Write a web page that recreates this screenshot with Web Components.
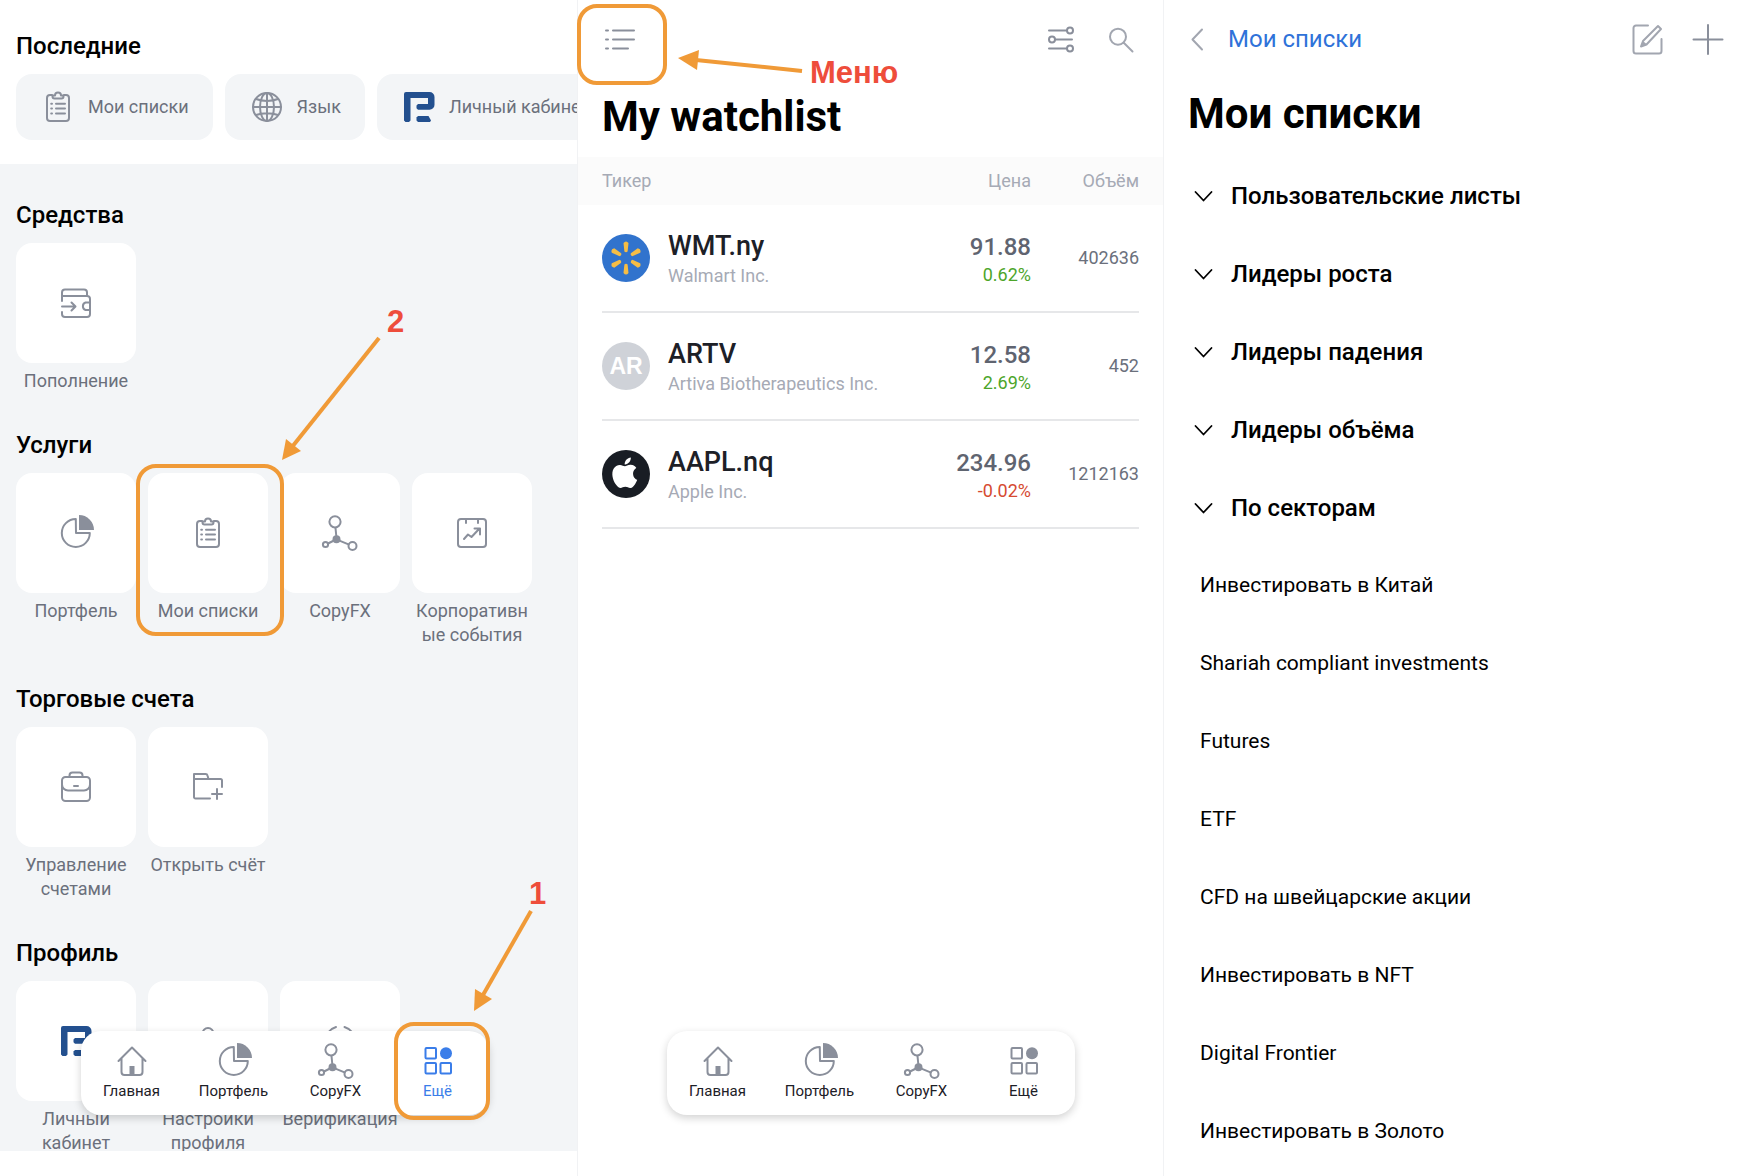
<!DOCTYPE html>
<html lang="ru">
<head>
<meta charset="utf-8">
<title>Мои списки</title>
<style>
  html, body { margin: 0; height: 100%; }
  body {
    background: #fff;
    color: #000;
    font-family: Roboto, "Liberation Sans", sans-serif;
    overflow: hidden;
  }
</style>
</head>
<body>
<guide-board>
  <more-screen></more-screen>
  <watchlist-screen></watchlist-screen>
  <lists-screen></lists-screen>
</guide-board>

<script>
// all icons are drawn on a 36x36 grid
const ICONS = {
  clipboard: `<path d="M12 6H10a3 3 0 0 0-3 3v20a3 3 0 0 0 3 3h16a3 3 0 0 0 3-3V9a3 3 0 0 0-3-3h-2"/>
    <path d="M12.5 6.5h2.5a3 3 0 0 1 6 0h2.5v1a2 2 0 0 1-2 2h-7a2 2 0 0 1-2-2z"/>
    <path d="M11.2 14.7h.8M11.2 19.5h.8M11.2 24.5h.8M16 14.7h9M16 19.5h9M16 24.5h9"/>`,
  globe: `<circle cx="18" cy="18" r="14"/><ellipse cx="18" cy="18" rx="7" ry="14"/>
    <path d="M4 18h28M18 4v28M7 10c6 2.5 16 2.5 22 0M7 26c6-2.5 16-2.5 22 0"/>`,
  logo: `<path class="brand" d="M3 31.5V5a2 2 0 0 1 2-2h23.5a5 5 0 0 1 5 5v7.7a5 5 0 0 1-5 5H17l-1.5-1.5v-2.700L17 15h10V9H9.5v22.500L8 33H4.500z"/>
    <path class="brand" d="M17 27h10.500l2.500 4.500-1 1.500H17l-1.500-1.500v-3z"/>`,
  wallet: `<path d="M4 16V7.5a3 3 0 0 1 3-3h19a3 3 0 0 1 3 3V11M4 11h25a3 3 0 0 1 3 3v15a3 3 0 0 1-3 3H7a3 3 0 0 1-3-3v-2"/>
    <path d="M4 21.5h13M13.5 17.5l4 4-4 4M32 17.5h-4.5a4 4 0 0 0 0 7.5H32"/>`,
  pie: `<path d="M17.8 4a14 14 0 1 0 14 14H18z"/><path class="solid" d="M21 0a15 15 0 0 1 15 15H21z"/>`,
  copyfx: `<circle cx="13" cy="6.8" r="5.6"/><circle class="solid" cx="14.5" cy="24.3" r="4"/>
    <circle cx="3.5" cy="29.5" r="2.6"/><circle cx="30.5" cy="31" r="4"/>
    <path d="M13.5 13l.8 8M6 28.5l5-2.5M18 25.8l8.5 3.5"/>`,
  calendar: `<rect x="4" y="4" width="28" height="28" rx="3"/><path d="M12 4v4M24 4v4"/>
    <path d="M10 24l4-4.5 3.5 2.5 8-8.5M20.5 13.5h5.5v6"/>`,
  briefcase: `<rect x="4" y="8" width="28" height="24" rx="3.5"/>
    <path d="M11.5 8V6.5a3 3 0 0 1 3-3h7a3 3 0 0 1 3 3V8M4 15.5a6 6 0 0 0 6 6h16a6 6 0 0 0 6-6M16 17h4"/>`,
  folder: `<path d="M20 29.5H5.5a1.5 1.5 0 0 1-1.5-1.5V5h11.5a2 2 0 0 1 2 1.5l1 3.5M4 10h26.5a1.5 1.5 0 0 1 1.5 1.5V18M27 20v10M22 25h10"/>`,
  person: `<circle cx="18" cy="10.5" r="5.5"/><path d="M6 31c1-7 6-10 12-10s11 3 12 10"/>`,
  verify: `<path d="M6 9.500Q9 5.500 14 4M22.500 4Q27.500 5.500 30.500 9.500M6 26q3 5 8 6M22.500 32q5-1 8-6"/><circle cx="18" cy="13.5" r="4"/>`,
  home: `<path d="M4.5 18L18 4.5 31.5 18M7.5 15.5V29a3 3 0 0 0 3 3h15a3 3 0 0 0 3-3V15.5"/><rect class="solid" x="15.5" y="23" width="5" height="9"/>`,
  more: `<rect x="5.5" y="5" width="10.5" height="10.5" rx="1"/><rect x="5.5" y="20" width="10.5" height="10.5" rx="1"/>
    <rect x="20.5" y="20" width="10.5" height="10.5" rx="1"/><circle class="solid" cx="26" cy="10.3" r="6"/>`,
  list: `<path d="M4 9.5h2M4 18.5h2M4 27.5h2M11 9.5h21M11 18.5h21M11 27.5h15"/>`,
  filter: `<path d="M6 9.5h18M12 18.5h17M6 27.5h18"/><circle cx="27" cy="9.5" r="3"/><circle cx="9" cy="18.5" r="3"/><circle cx="27" cy="27.5" r="3"/>`,
  search: `<circle cx="15" cy="15.7" r="8"/><path d="M20.5 21.5L29.5 30.5"/>`,
  back: `<path d="M14 8.5L4.5 18.5 14 28.5"/>`,
  edit: `<path d="M18 4.5H6a2.5 2.5 0 0 0-2.5 2.5v23A2.5 2.5 0 0 0 6 32.5h23a2.5 2.5 0 0 0 2.5-2.5V18"/>
    <path d="M28 5l3 3-14.5 15.5-5.5 2 2-5.5z"/><path class="solid" d="M13 20l4 3.5-6 2.5z"/>`,
  plus: `<path d="M18 4v29M3.5 18.5h29"/>`,
  down: `<path stroke-width="1.8" d="M11.5 14l8 8.500 8-8.500"/>`
};

const BADGES = {
  walmart: `<circle cx="24" cy="24" r="24" fill="#3173cd"/><g fill="#f6bd45">${[0, 60, 120, 180, 240, 300].map(a =>
    `<path transform="rotate(${a} 24 24)" d="M22.4 17.500l-.9-8.500q2.500-3 5 0l-.9 8.500q-1.600 1.600-3.200 0z"/>`).join('')}</g>`,
  artv: `<circle cx="24" cy="24" r="24" fill="#cfd2d8"/><text x="24" y="32" text-anchor="middle" font-size="23" font-weight="700" fill="#fff">AR</text>`,
  apple: `<circle cx="24" cy="24" r="24" fill="#191d24"/><path fill="#fff" transform="translate(7.5 7.5) scale(1.27)" d="M12.152 6.896c-.948 0-2.415-1.078-3.960-1.040-2.040.027-3.910 1.183-4.961 3.014-2.117 3.675-.546 9.103 1.519 12.090 1.013 1.454 2.208 3.090 3.792 3.039 1.520-.065 2.090-.987 3.935-.987 1.831 0 2.350.987 3.960.948 1.637-.026 2.676-1.480 3.676-2.948 1.156-1.688 1.636-3.325 1.662-3.415-.039-.013-3.182-1.221-3.220-4.857-.026-3.040 2.480-4.494 2.597-4.559-1.429-2.090-3.623-2.324-4.390-2.376-2-.156-3.675 1.090-4.610 1.090zM15.530 3.830c.843-1.012 1.400-2.427 1.245-3.830-1.207.052-2.662.805-3.532 1.818-.780.896-1.454 2.338-1.273 3.714 1.338.104 2.715-.688 3.560-1.702"/>`
};

class UiElement extends HTMLElement {
  connectedCallback() {
    if (this.shadowRoot) return;
    this.attachShadow({ mode: 'open' });
    const template = document.createElement('template');
    template.innerHTML = this.render();
    this.shadowRoot.appendChild(template.content.cloneNode(true));
  }
}

class UiIcon extends UiElement {
  render() {
    return `
      <style>
        :host { display: block; width: 36px; height: 36px; flex: none; color: #8a8f9b; }
        svg { display: block; overflow: visible; fill: none; stroke: currentColor; stroke-width: 2; stroke-linecap: round; stroke-linejoin: round; }
        .solid { fill: currentColor; stroke: none; }
        .brand { fill: #23508f; stroke: none; }
      </style>
      <svg width="36" height="36" viewBox="0 0 36 36" aria-hidden="true">${ICONS[this.getAttribute('name')]}</svg>`;
  }
}

class GuideBoard extends UiElement {
  render() {
    return `
      <style>
        :host { display: grid; grid-template-columns: 578fr 586fr 582fr; height: 100vh; min-height: 600px; }
        ::slotted(*) { min-width: 0; }
      </style>
      <slot></slot>`;
  }
}

// orange arrow of the guide, with its red caption
class GuideArrow extends UiElement {
  render() {
    return `
      <style>
        :host { position: absolute; pointer-events: none; color: #ee4d3b; font: 700 31px/36px "Liberation Sans", sans-serif; z-index: 3; }
        svg { display: block; overflow: visible; }
        span { position: absolute; left: var(--cap-x); top: var(--cap-y); }
      </style>
      <svg width="1" height="1" aria-hidden="true">
        <path d="${this.getAttribute('line')}" stroke="#f09a37" stroke-width="4" fill="none"/>
        <path d="${this.getAttribute('head')}" fill="#f09a37"/>
      </svg>
      <span><slot></slot></span>`;
  }
}

class RecentChip extends UiElement {
  render() {
    return `
      <style>
        :host { display: block; flex: none; }
        button {
          display: flex; align-items: center; gap: 12px; height: 66px; padding: 0 24px;
          border: 0; border-radius: 16px; background: #f3f5f7; color: #6b707c;
          font: 400 18px/24px Roboto, sans-serif; white-space: nowrap;
        }
      </style>
      <button type="button"><ui-icon name="${this.getAttribute('icon')}"></ui-icon><slot></slot></button>`;
  }
}

class ServiceTile extends UiElement {
  render() {
    return `
      <style>
        :host { display: block; width: 120px; position: relative; }
        :host([marked]) { z-index: 1; }
        button {
          display: flex; flex-direction: column; align-items: center; gap: 6px; width: 100%;
          padding: 0; border: 0; background: none; color: #6b707c;
          font: 400 18px/24px Roboto, sans-serif; text-align: center;
        }
        .face { display: flex; align-items: center; justify-content: center; width: 100%; height: 120px; border-radius: 16px; background: #fff; }
        .label { max-width: 116px; overflow-wrap: break-word; }
        :host([marked])::after {
          content: ""; position: absolute; inset: -9px -16px -13px -12px;
          border: 4px solid #f09a37; border-radius: 20px;
        }
      </style>
      <button type="button">
        <span class="face"><ui-icon name="${this.getAttribute('icon')}"></ui-icon></span>
        <span class="label"><slot></slot></span>
      </button>`;
  }
}

class TileSection extends UiElement {
  render() {
    return `
      <style>
        :host { display: block; margin-bottom: 37px; }
        h2 { margin: 0 0 13px; font-size: 24px; line-height: 30px; font-weight: 500; }
        .tiles { display: flex; align-items: flex-start; gap: 12px; }
      </style>
      <h2>${this.getAttribute('heading')}</h2>
      <div class="tiles"><slot></slot></div>`;
  }
}

class TabBar extends UiElement {
  render() {
    const active = this.getAttribute('active');
    const tabs = [['home', 'Главная'], ['pie', 'Портфель'], ['copyfx', 'CopyFX'], ['more', 'Ещё']];
    return `
      <style>
        :host { position: absolute; left: 0; right: 0; bottom: 61px; display: flex; justify-content: center; z-index: 2; }
        nav {
          display: grid; grid-template-columns: repeat(4, 1fr); width: 408px; height: 84px;
          border-radius: 20px; background: #fff; box-shadow: 0 3px 8px rgba(0, 0, 0, 0.18);
        }
        a {
          position: relative; display: flex; flex-direction: column; align-items: center;
          padding-top: 12px; box-sizing: border-box;
          color: #1d2027; font-size: 15px; line-height: 24px; text-decoration: none;
        }
        a.active, a.active ui-icon { color: #3a7de9; }
        a.active::after {
          content: ""; position: absolute; inset: -9px -1px -5px 7px;
          border: 4px solid #f09a37; border-radius: 20px;
        }
      </style>
      <nav>${tabs.map(([icon, label]) => `
        <a href="#${icon}" class="${icon === active ? 'active' : ''}"><ui-icon name="${icon}"></ui-icon>${label}</a>`).join('')}
      </nav>`;
  }
}

class MoreScreen extends UiElement {
  render() {
    return `
      <style>
        :host { display: flex; flex-direction: column; position: relative; box-sizing: border-box; height: 100%; padding-bottom: 25px; overflow: hidden; border-right: 1px solid #f1f2f4; }
        header { flex: none; padding: 31px 0 24px 16px; }
        h2 { margin: 0 0 13px; font-size: 24px; line-height: 30px; font-weight: 500; }
        .chips { display: flex; gap: 12px; }
        main { flex: 1; min-height: 0; overflow: hidden; padding: 36px 16px 0; background: #f3f5f7; }
        tab-bar { right: 8px; }
        .first { left: 474px; bottom: 164px; --cap-x: 55px; --cap-y: -135px; }
        .second { left: 282px; top: 460px; --cap-x: 105px; --cap-y: -156px; }
      </style>
      <header>
        <h2>Последние</h2>
        <div class="chips">
          <recent-chip icon="clipboard">Мои списки</recent-chip>
          <recent-chip icon="globe">Язык</recent-chip>
          <recent-chip icon="logo">Личный кабинет</recent-chip>
        </div>
      </header>
      <main>
        <tile-section heading="Средства">
          <service-tile icon="wallet">Пополнение</service-tile>
        </tile-section>
        <tile-section heading="Услуги">
          <service-tile icon="pie">Портфель</service-tile>
          <service-tile icon="clipboard" marked>Мои списки</service-tile>
          <service-tile icon="copyfx">CopyFX</service-tile>
          <service-tile icon="calendar">Корпоративные события</service-tile>
        </tile-section>
        <tile-section heading="Торговые счета">
          <service-tile icon="briefcase">Управление счетами</service-tile>
          <service-tile icon="folder">Открыть счёт</service-tile>
        </tile-section>
        <tile-section heading="Профиль">
          <service-tile icon="logo">Личный кабинет</service-tile>
          <service-tile icon="person">Настройки профиля</service-tile>
          <service-tile icon="verify">Верификация</service-tile>
        </tile-section>
      </main>
      <tab-bar active="more"></tab-bar>
      <guide-arrow class="second" line="M97 -122L10 -13" head="M0 0L4 -21 19 -9z">2</guide-arrow>
      <guide-arrow class="first" line="M57 -100L9 -16" head="M0 0L1 -22 18 -12z">1</guide-arrow>`;
  }
}

class WatchTable extends UiElement {
  render() {
    const rows = [
      ['walmart', 'WMT.ny', 'Walmart Inc.', '91.88', '0.62%', '402636'],
      ['artv', 'ARTV', 'Artiva Biotherapeutics Inc.', '12.58', '2.69%', '452'],
      ['apple', 'AAPL.nq', 'Apple Inc.', '234.96', '-0.02%', '1212163']
    ];
    return `
      <style>
        :host { display: block; padding: 0 24px; }
        table { width: 100%; border-spacing: 0; font-size: 18px; line-height: 24px; }
        th { height: 48px; padding: 0; background: #fbfbfb; color: #a6aab5; font-weight: 400; text-align: right; }
        th:first-child { text-align: left; box-shadow: -24px 0 #fbfbfb; }
        th:last-child { width: 108px; box-shadow: 24px 0 #fbfbfb; }
        td { height: 106px; padding: 0; border-bottom: 2px solid #e6e7e9; text-align: right; color: #6b707c; }
        .name { display: flex; align-items: center; gap: 18px; text-align: left; color: #a6aab5; }
        .badge { flex: none; font-family: "Liberation Sans", sans-serif; }
        b, i { display: block; font-style: normal; font-weight: 500; }
        .name b { color: #1d2027; font-size: 27px; line-height: 36px; }
        .price b { color: #5f6470; font-size: 24px; line-height: 34px; }
        .price i { color: #4da52a; font-weight: 400; line-height: 22px; }
        .price i.fall { color: #d64a31; }
      </style>
      <table>
        <thead><tr><th>Тикер</th><th>Цена</th><th>Объём</th></tr></thead>
        <tbody>${rows.map(([badge, ticker, company, price, change, volume]) => `
          <tr>
            <td><div class="name">
              <svg class="badge" width="48" height="48" viewBox="0 0 48 48">${BADGES[badge]}</svg>
              <div><b>${ticker}</b>${company}</div>
            </div></td>
            <td class="price"><b>${price}</b><i class="${change[0] === '-' ? 'fall' : ''}">${change}</i></td>
            <td>${volume}</td>
          </tr>`).join('')}
        </tbody>
      </table>`;
  }
}

class WatchlistScreen extends UiElement {
  render() {
    return `
      <style>
        :host { display: block; position: relative; box-sizing: border-box; height: 100%; border-right: 1px solid #f1f2f4; }
        header { display: flex; gap: 24px; padding: 21px 24px 36px; }
        button { position: relative; padding: 0; border: 0; background: none; }
        .menu { margin-right: auto; }
        .menu::after {
          content: ""; position: absolute; inset: -17px -29px -28px -25px;
          border: 4px solid #f09a37; border-radius: 20px;
        }
        .search ui-icon { color: #a2a6b0; }
        h1 { margin: 0 24px 16px; font-size: 42px; line-height: 48px; font-weight: 700; }
        guide-arrow { left: 100px; top: 58px; --cap-x: 132px; --cap-y: -3px; }
      </style>
      <header>
        <button class="menu" type="button" aria-label="Меню"><ui-icon name="list"></ui-icon></button>
        <button type="button" aria-label="Фильтр"><ui-icon name="filter"></ui-icon></button>
        <button class="search" type="button" aria-label="Поиск"><ui-icon name="search"></ui-icon></button>
      </header>
      <h1>My watchlist</h1>
      <watch-table></watch-table>
      <guide-arrow line="M124 13L18 2" head="M0 0L21 -8 19 12z">Меню</guide-arrow>
      <tab-bar></tab-bar>`;
  }
}

class ListsScreen extends UiElement {
  render() {
    const groups = ['Пользовательские листы', 'Лидеры роста', 'Лидеры падения', 'Лидеры объёма', 'По секторам'];
    const sectors = ['Инвестировать в Китай', 'Shariah compliant investments', 'Futures', 'ETF',
      'CFD на швейцарские акции', 'Инвестировать в NFT', 'Digital Frontier', 'Инвестировать в Золото'];
    return `
      <style>
        :host { display: block; height: 100%; overflow: hidden; }
        header { display: flex; align-items: center; gap: 24px; padding: 21px 20px 33px 24px; }
        header button { padding: 0; border: 0; background: none; }
        .back { display: flex; align-items: center; gap: 4px; margin-right: auto; color: #2f72d9; font-size: 24px; line-height: 36px; text-decoration: none; }
        .back ui-icon, .edit ui-icon { color: #a2a6b0; }
        h1 { margin: 0 24px 19px; font-size: 42px; line-height: 48px; font-weight: 700; }
        .group {
          display: flex; align-items: center; gap: 11px; width: 100%; height: 78px; padding: 0 20px;
          border: 0; background: none; color: #000; font: 500 24px/30px Roboto, sans-serif;
        }
        .group ui-icon { color: #000; }
        ul { margin: -1px 0 0; padding: 0; list-style: none; }
        .sector { display: flex; align-items: center; height: 78px; padding: 0 36px; color: #000; font-size: 21px; line-height: 24px; text-decoration: none; }
      </style>
      <header>
        <a class="back" href="#watchlist"><ui-icon name="back"></ui-icon>Мои списки</a>
        <button class="edit" type="button" aria-label="Изменить"><ui-icon name="edit"></ui-icon></button>
        <button type="button" aria-label="Добавить"><ui-icon name="plus"></ui-icon></button>
      </header>
      <h1>Мои списки</h1>
      ${groups.map(name => `<button class="group" type="button"><ui-icon name="down"></ui-icon>${name}</button>`).join('')}
      <ul>${sectors.map(name => `<li><a class="sector" href="#list">${name}</a></li>`).join('')}</ul>`;
  }
}

customElements.define('ui-icon', UiIcon);
customElements.define('guide-arrow', GuideArrow);
customElements.define('recent-chip', RecentChip);
customElements.define('service-tile', ServiceTile);
customElements.define('tile-section', TileSection);
customElements.define('tab-bar', TabBar);
customElements.define('watch-table', WatchTable);
customElements.define('more-screen', MoreScreen);
customElements.define('watchlist-screen', WatchlistScreen);
customElements.define('lists-screen', ListsScreen);
customElements.define('guide-board', GuideBoard);
</script>
</body>
</html>
